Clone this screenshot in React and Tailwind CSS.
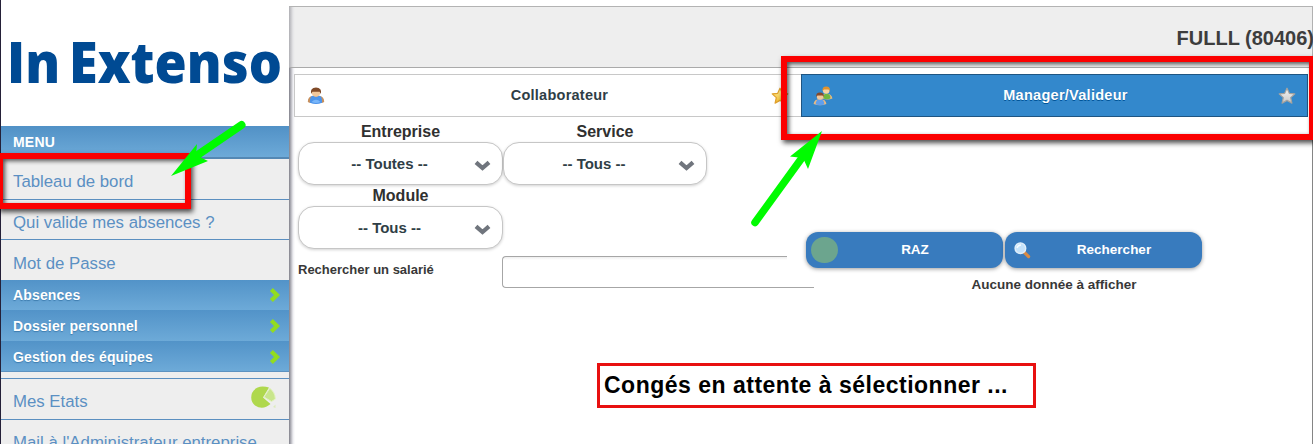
import React from "react";

function Chevron() {
  return (
    <svg className="h-[16px] w-[12px]" viewBox="0 0 12 16">
      <path d="M2.400 2.600 L8 8 L2.400 13.400" fill="none" stroke="#92dc20" strokeWidth="4.2" />
    </svg>
  );
}

function Star({ light }) {
  return (
    <svg className="h-[18px] w-[18px] shrink-0" viewBox="0 0 18 18">
      <defs>
        <linearGradient id={light ? "silver" : "gold"} x1="0" y1="0" x2="0" y2="1">
          <stop offset="0" stopColor={light ? "#f6f6f6" : "#fff3a0"} />
          <stop offset="1" stopColor={light ? "#c8c8c8" : "#f2b92c"} />
        </linearGradient>
      </defs>
      <path
        d="M9 1.2 L11.3 6.3 L16.8 6.9 L12.7 10.6 L13.9 16.1 L9 13.4 L4.1 16.1 L5.3 10.6 L1.2 6.9 L6.7 6.3 Z"
        fill={light ? "url(#silver)" : "url(#gold)"}
        stroke={light ? "#a5a39f" : "#dfa02d"}
        strokeWidth="1.2"
        strokeLinejoin="round"
      />
    </svg>
  );
}

function UserIcon() {
  return (
    <svg className="h-[18px] w-[18px]" viewBox="0 0 18 18">
      <path d="M.8 15 Q.8 9.600 5.500 9 H12.500 Q17.200 9.600 17.200 15 L15 16 H3 Z" fill="#c78f5c" />
      <path d="M3 15.800 Q2.400 9 6.500 8.600 L9 10 L11.500 8.600 Q15.600 9 15 15.800 Q9 18.200 3 15.800Z" fill="#4d94ea" />
      <path d="M4.500 15 Q9 10.500 13.500 15 Q9 17 4.500 15Z" fill="#78b6fa" />
      <circle cx="9" cy="5.5" r="4.300" fill="#f1c79b" />
      <path d="M4 7 Q2.900 .5 9 .4 Q15.100 .5 14 7 L12.600 4.800 H5.400 Z" fill="#804a28" />
    </svg>
  );
}

function TeamIcon() {
  return (
    <svg className="h-[20px] w-[20px]" viewBox="0 0 20 20">
      <path d="M9 12.5 Q9 7.5 13.5 7.5 Q18.8 8 19.4 12.4 Q15 14.5 9 12.5Z" fill="#e7b983" />
      <path d="M10.5 12.5 Q10 7.6 13.7 7.6 Q17.6 8 17.4 12.4 Q14 14 10.5 12.5Z" fill="#6fb73f" />
      <circle cx="13.2" cy="4.4" r="3.3" fill="#f6d3a5" />
      <path d="M9.5 5 Q9 .5 13.2 .5 Q17.4 .5 16.9 5 L15.5 3.6 H11Z" fill="#e2922a" />
      <path d="M.6 18 Q1 13.2 7 13 Q13 13.2 13.4 18 Q7 20.5 .6 18Z" fill="#e7b983" />
      <path d="M2.7 18.5 Q2.6 13.3 7 13.2 Q11.4 13.3 11.3 18.5 Q7 19.8 2.7 18.5Z" fill="#5f9fee" />
      <circle cx="7" cy="10.5" r="3.2" fill="#f1c79b" />
      <path d="M3.2 11 Q2.8 6.6 7 6.6 Q11.2 6.6 10.8 11 L9.5 9.5 H4.5Z" fill="#84492b" />
    </svg>
  );
}

function Magnifier() {
  return (
    <svg className="h-[17px] w-[17px]" viewBox="0 0 17 17">
      <path d="M10.3 10.3 L14.6 14.6" stroke="#d98b45" strokeWidth="3.2" strokeLinecap="round" />
      <circle cx="6.4" cy="6.3" r="5.3" fill="#c4e2fb" stroke="#dfeefa" strokeWidth="1.5" />
      <path d="M3 6 Q4 3 7 3" stroke="#f5fbff" strokeWidth="1.4" fill="none" />
    </svg>
  );
}

function PieIcon() {
  return (
    <svg className="h-[23px] w-[25px]" viewBox="0 0 25 23">
      <path d="M12 11.500 L18 1.500 Q15 .6 11.500 .6 Q4 .8 1 7 Q-1.500 14.500 4 19.500 Q12 24.500 19.500 18 Z" fill="#afd84d" />
      <path d="M13 11 L18.800 2.300 Q24 6 24.400 13 L20.500 15.500 Z" fill="#c9e68c" stroke="#e3f2c2" strokeWidth="1" />
      <path d="M22 21 L24.5 18.5 V22 Z" fill="#dcebbd" />
    </svg>
  );
}

function MenuLink({ children, className, icon }) {
  return (
    <div className={"flex shrink-0 justify-between pl-3 text-[16.8px] leading-[20px] text-[#5b90c3] " + className}>
      <span className="whitespace-nowrap">{children}</span>
      {icon}
    </div>
  );
}

function MenuGroup({ children, className }) {
  return (
    <div className={"flex shrink-0 items-center justify-between bg-linear-to-b from-[#5293c8] to-[#6daad8] pr-[8px] pl-3 text-[14px] tracking-[0.16px] font-bold text-white [text-shadow:0_1px_1px_#3d7cae] " + className}>
      <span className="whitespace-nowrap">{children}</span>
      <Chevron />
    </div>
  );
}

function Select({ label, value, className }) {
  return (
    <div className={"flex flex-col " + className}>
      <div className="h-[21px] pt-px text-center text-[16px] leading-[20px] font-bold text-[#303030]">{label}</div>
      <div className="flex h-[43px] items-center rounded-[16px] border border-[#c6c6c6] bg-white pr-[11px] shadow-[0_1px_3px_rgba(0,0,0,0.18)]">
        <span className="flex-1 pt-[2px] pl-[6px] text-center text-[15px] font-bold text-[#2f3e46]">{value}</span>
        <svg className="mt-[4px] h-[11px] w-[17px]" viewBox="0 0 17 11">
          <path d="M2 2.3 L8.500 8 L15 2.3" fill="none" stroke="#70757d" strokeWidth="4.2" />
        </svg>
      </div>
    </div>
  );
}

export default function App() {
  return (
    <div className="relative flex h-[444px] w-[1313px] overflow-hidden bg-white font-['Liberation_Sans',Arial,sans-serif]">
      <aside className="relative flex w-[289px] shrink-0 flex-col overflow-hidden border-l border-[#242038] bg-[#eeeeee]">
        <div className="flex h-[126px] shrink-0 items-center bg-white pb-[4px] pl-[6px]">
          <span className="origin-left scale-x-[0.915] text-[57px] leading-none font-extrabold [word-spacing:-5px] whitespace-nowrap text-[#004a93] font-['Open_Sans','Noto_Sans',sans-serif]">
            In Extenso
          </span>
        </div>
        <div className="flex h-[33px] shrink-0 items-center border-b-2 border-[#5488b4] bg-linear-to-b from-[#5191c6] to-[#6daad8] pt-px pl-3 text-[14px] tracking-[0.2px] font-bold text-white">
          MENU
        </div>
        <MenuLink className="h-[41px] border-b border-b-[#5b8fc0] pt-[13px]">Tableau de bord</MenuLink>
        <MenuLink className="h-[40px] border-b border-b-[#5b8fc0] pt-[13px]">Qui valide mes absences ?</MenuLink>
        <MenuLink className="h-[40px] pt-[14px]">Mot de Passe</MenuLink>
        <MenuGroup className="h-[30px]">Absences</MenuGroup>
        <MenuGroup className="h-[31px] pt-px">Dossier personnel</MenuGroup>
        <MenuGroup className="h-[31px] border-b border-b-[#5d92c0] pt-[2px]">Gestion des équipes</MenuGroup>
        <div className="h-[7px] shrink-0 border-b border-b-[#5b8fc0]" />
        <MenuLink className="h-[41px] border-b border-b-[#5b8fc0] pt-[13px] pr-[13px]" icon={<span className="-mt-[6px]"><PieIcon /></span>}>
          Mes Etats
        </MenuLink>
        <MenuLink className="h-[41px] pt-[13px]">Mail à l'Administrateur entreprise</MenuLink>
      </aside>

      <main className="flex w-[1024px] flex-col pt-[6px]">
        <div className="flex grow flex-col border-r border-[#858585] bg-[linear-gradient(to_right,#80808a_0px,#b5b5bc_2px,#ececf0_4px,#ffffff_6px)]">
          <header className="-mr-px flex h-[62px] shrink-0 items-center justify-end border-y border-t-[#b3b3b3] border-b-[#aaaaaa] bg-[#dddddd]/50 pt-px text-[20px] font-bold whitespace-nowrap text-[#3d3d3d]">
            <span className="-mr-px">FULLL (80406)</span>
          </header>
          <nav className="flex shrink-0 pt-[6px] pl-[5px] text-[14.5px] font-bold">
            <div className="flex h-[43px] w-[507px] items-center justify-between border border-r-0 border-[#c8c8c8] bg-white pr-[12px] pl-[12px] text-[#2f3e46]">
              <UserIcon />
              <span className="pt-px pl-[23px] tracking-[0.25px]">Collaborateur</span>
              <Star />
            </div>
            <div className="flex h-[43px] w-[507px] items-center justify-between border border-[#1f5582] bg-[#3388cc] pr-[11px] pl-[11px] text-white [text-shadow:0_1px_0_#005599]">
              <TeamIcon />
              <span className="pt-px pl-[20px] tracking-[0.28px]">Manager/Valideur</span>
              <Star light />
            </div>
          </nav>
          <div className="flex pt-[4px] pl-[9px]">
            <section className="w-[508px] shrink-0">
              <div className="flex">
                <Select label="Entreprise" value="-- Toutes --" className="w-[205px]" />
                <Select label="Service" value="-- Tous --" className="w-[204px]" />
              </div>
              <Select label="Module" value="-- Tous --" className="w-[205px]" />
              <div className="flex pt-[7px]">
                <label className="w-[204px] shrink-0 pt-[6px] text-[13px] leading-[16px] font-bold text-[#383838]">Rechercher un salarié</label>
                <div className="flex h-[32px] shrink-0 flex-col">
                  <div className="h-[16px] w-[285px] rounded-tl-[4px] border-t border-l border-[#a6a6a6] bg-[linear-gradient(to_bottom,#eeeeee,#ffffff_3px)]" />
                  <div className="h-[16px] w-[312px] rounded-bl-[4px] border-b border-l border-[#a6a6a6] bg-white" />
                </div>
              </div>
            </section>
            <section className="flex w-[396px] flex-col pt-[111px]">
              <div className="flex gap-[2px]">
                <button className="flex h-[36px] w-[197px] items-center rounded-[12px] bg-[#387bbe] pl-[5px] text-[13.5px] font-bold text-white shadow-[0_1px_4px_rgba(0,0,0,0.4)]">
                  <span className="h-[26px] w-[27px] rounded-full bg-[#6ca58e]" />
                  <span className="flex-1 pr-[11px] text-center">RAZ</span>
                </button>
                <button className="flex h-[36px] w-[197px] items-center rounded-[12px] bg-[#387bbe] pl-[9px] text-[13.5px] font-bold text-white shadow-[0_1px_4px_rgba(0,0,0,0.4)]">
                  <Magnifier />
                  <span className="flex-1 pl-[16px] pr-[21px] text-center">Rechercher</span>
                </button>
              </div>
              <p className="pt-[8px] pl-[100px] text-center text-[13.500px] leading-[17px] font-bold text-[#383838]">Aucune donnée à afficher</p>
            </section>
          </div>
        </div>
      </main>

      <div className="absolute top-[363px] left-[597px] flex h-[45px] w-[439px] items-center border-[3px] border-[#e81010] bg-white pb-px pl-[4px] text-[23px] font-bold tracking-[0.5px] whitespace-nowrap text-black">
        Congés en attente à sélectionner ...
      </div>
      <div className="absolute top-[153px] left-[-3px] h-[56px] w-[194px] border-[6px] border-[#fb0000] shadow-[2px_3px_5px_rgba(0,0,0,0.7),inset_2px_2px_4px_rgba(0,0,0,0.65)]" />
      <div className="absolute top-[56px] left-[781px] h-[84px] w-[534px] border-[6px] border-[#fb0000] shadow-[2px_3px_5px_rgba(0,0,0,0.7),inset_2px_2px_4px_rgba(0,0,0,0.65)]" />
      <svg className="absolute inset-0 h-[444px] w-[1313px]" viewBox="0 0 1313 444">
        <g stroke="#00fb00" fill="#00fb00">
          <path d="M241.5 125 L199 154" strokeWidth="8" strokeLinecap="round" />
          <path d="M171 176 L197 144 L196 155 L208 161 Z" stroke="none" />
          <path d="M755 222.500 L804 155" strokeWidth="7.500" strokeLinecap="round" />
          <path d="M822 131 L790 156.500 L803 158 L808 169 Z" stroke="none" />
        </g>
      </svg>
    </div>
  );
}
